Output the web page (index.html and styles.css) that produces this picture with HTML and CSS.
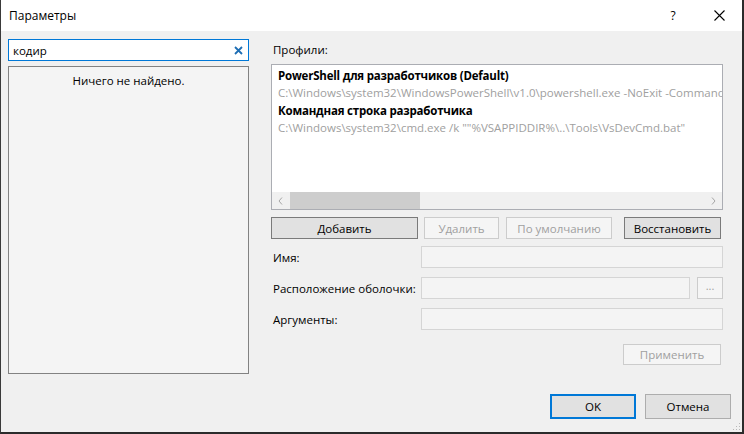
FILE: index.html
```html
<!DOCTYPE html>
<html lang="ru">
<head>
  <meta charset="UTF-8" />
  <title>Параметры</title>
  <link rel="stylesheet" href="styles.css">
</head>
<body>
  <div class="window">
    <div class="titlebar">
      <span class="titlebar__text">Параметры</span>
      <span class="titlebar__help">?</span>
      <span class="titlebar__close">
        <svg width="11" height="11" viewBox="0 0 11 11"><path d="M0.5 0.5L10.5 10.5M10.5 0.5L0.5 10.5" stroke="#000" stroke-width="1.1" fill="none"/></svg>
      </span>
    </div>

    <div class="content">
      <div class="sidebar">
        <div class="search">
          <span class="search__text">кодир</span>
          <svg class="search__clear" width="9" height="9" viewBox="0 0 9 9"><path d="M1 1L8 8M8 1L1 8" stroke="#1e6eb4" stroke-width="1.8" fill="none"/></svg>
        </div>
        <div class="tree">
          <p class="tree__empty">Ничего не найдено.</p>
        </div>
      </div>

      <div class="main">
        <div class="main__label">Профили:</div>
        <div class="profiles">
          <div class="profiles__items">
            <div class="profile">
              <div class="profile__name">PowerShell для разработчиков (Default)</div>
              <div class="profile__cmd">C:\Windows\system32\WindowsPowerShell\v1.0\powershell.exe -NoExit -Command</div>
            </div>
            <div class="profile">
              <div class="profile__name">Командная строка разработчика</div>
              <div class="profile__cmd">C:\Windows\system32\cmd.exe /k ""%VSAPPIDDIR%\..\Tools\VsDevCmd.bat"</div>
            </div>
          </div>
          <div class="hscroll">
            <svg class="hscroll__arrow" width="5" height="8" viewBox="0 0 5 8"><path d="M4 0.5L1 4L4 7.5" stroke="#a6a6a6" fill="none"/></svg>
            <div class="hscroll__track"><div class="hscroll__thumb"></div></div>
            <svg class="hscroll__arrow" width="5" height="8" viewBox="0 0 5 8"><path d="M1 0.5L4 4L1 7.5" stroke="#a6a6a6" fill="none"/></svg>
          </div>
        </div>

        <div class="actions">
          <button class="btn btn--add">Добавить</button>
          <button class="btn btn--off btn--del">Удалить</button>
          <button class="btn btn--off btn--def">По умолчанию</button>
          <button class="btn btn--restore">Восстановить</button>
        </div>

        <div class="form">
          <div class="form__row">
            <span class="form__label">Имя:</span>
            <span class="field"></span>
          </div>
          <div class="form__row">
            <span class="form__label">Расположение оболочки:</span>
            <span class="field"></span>
            <span class="browse">...</span>
          </div>
          <div class="form__row">
            <span class="form__label">Аргументы:</span>
            <span class="field"></span>
          </div>
        </div>

        <div class="apply">
          <button class="btn btn--off btn--apply">Применить</button>
        </div>
      </div>
    </div>

    <div class="footer">
      <button class="btn btn--ok">OK</button>
      <button class="btn btn--cancel">Отмена</button>
      <svg class="grip" width="8" height="8" viewBox="0 0 8 8">
        <rect x="6" y="0" width="1" height="1" fill="#b8b8b8"/>
        <rect x="3" y="3" width="1" height="1" fill="#b8b8b8"/>
        <rect x="6" y="3" width="1" height="1" fill="#b8b8b8"/>
        <rect x="0" y="6" width="1" height="1" fill="#b8b8b8"/>
        <rect x="3" y="6" width="1" height="1" fill="#b8b8b8"/>
        <rect x="6" y="6" width="1" height="1" fill="#b8b8b8"/>
      </svg>
    </div>
  </div>
</body>
</html>
```

FILE: styles.css
```css
* {
  box-sizing: border-box;
}

body {
  margin: 0;
  background: #2b2b2b;
  font-family: "Open Sans", "Noto Sans", sans-serif;
  font-size: 11.5px;
  color: #000;
}

.window {
  width: 744px;
  height: 434px;
  display: flex;
  flex-direction: column;
  background: #f0f0f0;
  border-left: 1px solid #3a3a3a;
  border-right: 2px solid #2b2b2b;
  border-bottom: 2px solid #2b2b2b;
  overflow: hidden;
}

/* title bar */
.titlebar {
  height: 31px;
  flex: none;
  display: flex;
  align-items: center;
  background: #fff;
  padding-left: 8px;
}
.titlebar__text {
  font-size: 12px;
  flex: 1;
}
.titlebar__help {
  font-size: 12px;
  width: 46px;
  text-align: center;
}
.titlebar__close {
  width: 46px;
  height: 31px;
  display: flex;
  align-items: center;
  justify-content: center;
}

/* two columns */
.content {
  display: flex;
  gap: 22px;
  padding: 8px 0 0 7px;
}

.sidebar {
  width: 241px;
  display: flex;
  flex-direction: column;
  gap: 5px;
}
.search {
  height: 22px;
  border: 1px solid #0078d7;
  background: #fff;
  display: flex;
  align-items: center;
  padding: 0 5px 0 4px;
}
.search__text {
  flex: 1;
}
.tree {
  height: 308px;
  border: 1px solid #828282;
  background: #f4f4f4;
}
.tree__empty {
  margin: 6px 0 0;
  text-align: center;
}

.main {
  width: 452px;
  display: flex;
  flex-direction: column;
}
.main__label {
  height: 25px;
  padding: 3px 0 0 2px;
}

/* profile list */
.profiles {
  height: 146px;
  border: 1px solid #abadb3;
  background: #fff;
  display: flex;
  flex-direction: column;
  overflow: hidden;
}
.profiles__items {
  flex: 1;
  padding: 2px 0 0 6px;
  overflow: hidden;
}
.profile {
  padding-bottom: 1px;
}
.profile__name,
.profile__cmd {
  white-space: nowrap;
  line-height: 17px;
  overflow: hidden;
}
.profile__name {
  font-weight: bold;
  letter-spacing: -0.2px;
}
.profile__cmd {
  color: #a0a0a0;
}

.hscroll {
  height: 17px;
  flex: none;
  display: flex;
  align-items: center;
  background: #f0f0f0;
}
.hscroll__arrow {
  flex: none;
  margin: 0 6px;
}
.hscroll__track {
  flex: 1;
  height: 100%;
}
.hscroll__thumb {
  width: 130px;
  height: 100%;
  margin-left: 1px;
  background: #cdcdcd;
}

/* buttons */
.btn {
  font: inherit;
  height: 22px;
  padding: 0;
  border: 1px solid #adadad;
  background: #e1e1e1;
  color: #000;
}
.btn--off {
  background: #f5f5f5;
  border-color: #cccccc;
  color: #a0a0a0;
}

.actions {
  display: flex;
  margin-top: 7px;
}
.btn--add {
  width: 147px;
  border-color: #7a7a7a;
}
.btn--del {
  width: 75px;
  margin-left: 6px;
}
.btn--def {
  width: 106px;
  margin-left: 7px;
}
.btn--restore {
  width: 97px;
  margin-left: 12px;
  border-color: #7a7a7a;
}

/* form */
.form {
  display: flex;
  flex-direction: column;
  gap: 9px;
  margin-top: 7px;
}
.form__row {
  display: flex;
  align-items: center;
  height: 22px;
}
.form__label {
  width: 150px;
  padding-left: 2px;
}
.field {
  flex: 1;
  height: 22px;
  border: 1px solid #d5d5d5;
  background: #f4f4f4;
}
.browse {
  width: 26px;
  height: 22px;
  margin-left: 7px;
  border: 1px solid #cccccc;
  background: #f5f5f5;
  color: #a0a0a0;
  text-align: center;
  line-height: 16px;
  font-size: 11px;
}

.apply {
  display: flex;
  justify-content: flex-end;
  margin-top: 14px;
  padding-right: 2px;
}
.btn--apply {
  width: 98px;
  height: 21px;
}

/* footer */
.footer {
  margin-top: auto;
  display: flex;
  justify-content: flex-end;
  align-items: flex-end;
  gap: 9px;
  padding: 0 11px 13px 0;
  position: relative;
}
.btn--ok,
.btn--cancel {
  width: 86px;
  height: 25px;
}
.btn--ok {
  border: 2px solid #0078d7;
}
.grip {
  position: absolute;
  right: 1px;
  bottom: 1px;
}
```
